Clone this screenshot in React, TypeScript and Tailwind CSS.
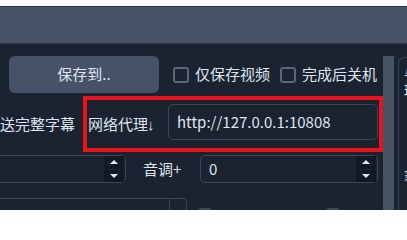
const font = { fontFamily: '"Noto Sans CJK SC", "Noto Sans", sans-serif' };

function Checkbox({ label }: { label: string }) {
  return (
    <label className="flex items-center gap-[6px] text-[15px] text-[#dfe5ee]">
      <span className="h-[16px] w-[16px] rounded-[3px] border-2 border-[#5b6677] bg-[#1b2230]" />
      {label}
    </label>
  );
}

function SpinButtons() {
  return (
    <div className="flex h-full flex-col justify-center gap-[1px] pr-[1px]">
      <button className="flex h-[13px] w-[20px] items-center justify-center bg-[#131922]">
        <svg width="8" height="4" viewBox="0 0 8 4">
          <path d="M0 4 L4 0 L8 4 Z" fill="#e5e9ef" />
        </svg>
      </button>
      <button className="flex h-[13px] w-[20px] items-center justify-center bg-[#131922]">
        <svg width="8" height="4" viewBox="0 0 8 4">
          <path d="M0 0 L8 0 L4 4 Z" fill="#e5e9ef" />
        </svg>
      </button>
    </div>
  );
}

export default function App() {
  return (
    <div className="h-[210px] w-[407px] overflow-hidden bg-[#1b2230]" style={font}>
      {/* window top */}
      <div className="h-[6px] bg-white" />
      <div className="h-[1px] bg-[#2a3240]" />
      <div className="h-[36px] bg-[#475264]" />
      <div className="h-[1px] bg-[#2c3545]" />

      <div className="flex">
        {/* main settings column */}
        <div className="flex w-[383px] shrink-0 flex-col pt-[12px]">
          <div className="flex h-[37px] items-center">
            <button className="ml-[9px] h-[37px] w-[150px] rounded-[6px] bg-[#475266] text-[15px] text-[#dfe5ee]">
              保存到..
            </button>
            <div className="ml-[14px] flex items-center gap-[10px]">
              <Checkbox label="仅保存视频" />
              <Checkbox label="完成后关机" />
            </div>
          </div>

          <div className="mt-[3px] flex h-[56px] items-center">
            <span className="w-[83px] shrink-0 text-[15px] text-[#dfe5ee]">送完整字幕</span>
            <div className="flex h-[56px] flex-1 items-start border-[4px] border-[#e8141c] pt-[4px]">
              <span className="mt-[9px] w-[81px] shrink-0 pl-[1px] text-[15px] text-[#dfe5ee]">
                网络代理
                <span className="ml-[-1px]" style={{ fontFamily: '"Liberation Sans", sans-serif' }}>↓</span>
              </span>
              <div className="flex h-[36px] w-[210px] items-center rounded-[5px] border border-[#3b4556] px-[8px] text-[15px] text-[#dfe5ee]">
                http://127.0.0.1:10808
              </div>
            </div>
          </div>

          <div className="mt-[3px] flex h-[28px] items-center">
            <div className="-ml-[4px] flex h-[28px] w-[130px] items-center justify-end rounded-[5px] border border-[#3b4556]">
              <SpinButtons />
            </div>
            <span className="ml-[17px] w-[57px] text-[15px] text-[#dfe5ee]">音调+</span>
            <div className="flex h-[28px] w-[178px] items-center justify-between rounded-[5px] border border-[#3b4556] pl-[8px]">
              <span className="text-[15px] text-[#dfe5ee]">0</span>
              <SpinButtons />
            </div>
          </div>

          <div className="mt-[15px] flex h-[20px] items-start">
            <div className="-ml-[4px] flex h-[20px] w-[191px] justify-end rounded-t-[5px] border border-b-0 border-[#3b4556]">
              <div className="w-[17px] border-l border-[#3b4556]" />
            </div>
            <span className="ml-[11px] mt-[10px] h-[6px] w-[14px] rounded-t-[3px] bg-[#3b4556]" />
            <span className="ml-[114px] mt-[10px] h-[6px] w-[14px] rounded-t-[3px] bg-[#3b4556]" />
          </div>
        </div>

        {/* scrollbar */}
        <div className="mt-[12px] h-[170px] w-[11px] shrink-0 bg-[#475263]" />

        {/* right panel */}
        <div className="ml-[4px] mt-[13px] flex h-[170px] min-w-0 flex-1 flex-col overflow-hidden whitespace-nowrap rounded-tl-[6px] border-l border-t border-[#3b4556] pl-[5px] pt-[6px] text-[13px] leading-[17px] text-[#dfe5ee]">
          <span>与</span>
          <span>玛</span>
          <span className="mt-[68px]">翁</span>
        </div>
      </div>
    </div>
  );
}
